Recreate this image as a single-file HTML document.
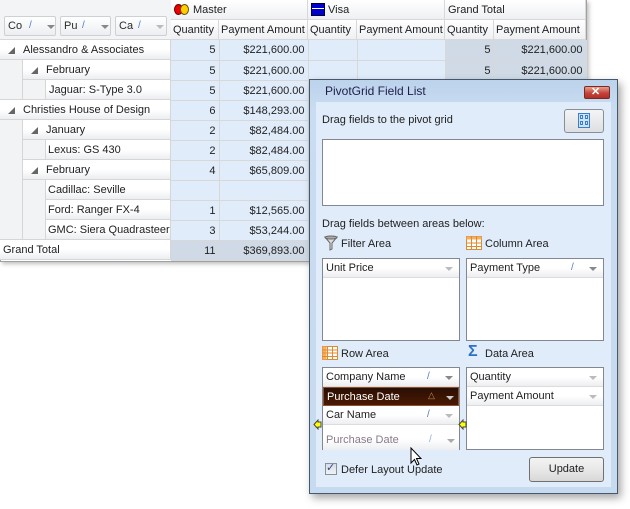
<!DOCTYPE html>
<html><head><meta charset="utf-8"><style>
*{margin:0;padding:0;box-sizing:border-box}
body{width:630px;height:509px;background:#fff;font-family:"Liberation Sans",Tahoma,sans-serif;font-size:11px;color:#1e1e1e;position:relative;overflow:hidden}
.a{position:absolute;white-space:nowrap}
.hd{background:linear-gradient(#fff,#eef0f3);border-right:1px solid #d8d8d8;border-bottom:1px solid #d8d8d8}
.rh{background:linear-gradient(#fff 50%,#eceef1);border-bottom:1px solid #d6d6d6;border-right:1px solid #d6d6d6;padding:4px 0 0 0;height:20px}
.tri{display:inline-block;width:0;height:0;border-left:7px solid transparent;border-bottom:7px solid #666;margin:0 8px 0 8px;vertical-align:-1px}
table{border-collapse:collapse;position:absolute;left:171px;top:40px}
td{height:20px;border-right:1px solid #d8d8d8;border-bottom:1px solid #d8d8d8;background:#e1ecfa;text-align:right;padding:1px 3px 0 3px;font-size:11px}
td.g{background:#cfdae6}
.btn{position:absolute;height:20px;border:1px solid #cdd0d4;background:linear-gradient(#fff,#eceef1);border-radius:2px;padding:3px 0 0 3px;color:#2a2a2a}
.dd{position:absolute;width:0;height:0;border-left:4px solid transparent;border-right:4px solid transparent;border-top:4px solid #888}
.sl{position:absolute;color:#5577cc;font-size:10px}
.box{position:absolute;background:#fff;border:1px solid #828790}
.fi{position:absolute;left:0;right:0;height:19px;background:linear-gradient(#fff 50%,#eceef1);border-bottom:1px solid #dcdcdc;padding:3px 0 0 3px}
</style></head><body>

<!-- GRID -->
<div class="a" style="left:0;top:0;width:587px;height:262px;border:1px solid #a0a0a0;border-top:none;background:#fff;box-shadow:2px 2px 4px rgba(0,0,0,.25)"></div>
<div class="a" style="left:0;top:0;width:171px;height:40px;background:#f3f4f6;border-bottom:1px solid #d8d8d8"></div>
<div class="btn" style="left:4px;top:16px;width:52px">Co<span class="sl" style="left:24px;top:3px">/</span><span class="dd" style="left:42px;top:8px"></span></div>
<div class="btn" style="left:60px;top:16px;width:51px">Pu<span class="sl" style="left:21px;top:3px">/</span><span class="dd" style="left:40px;top:8px"></span></div>
<div class="btn" style="left:115px;top:16px;width:52px">Ca<span class="sl" style="left:22px;top:3px">/</span><span class="dd" style="left:40px;top:8px;border-top-color:#bbb"></span></div>

<!-- column headers -->
<div class="a hd" style="left:171px;top:0;width:137px;height:20px;padding:4px 0 0 22px">Master</div>
<div class="a" style="left:174px;top:4px;width:9px;height:11px;border-radius:50%;background:#e00;border:1px solid #600"></div>
<div class="a" style="left:180px;top:4px;width:9px;height:11px;border-radius:50%;background:#fc0;border:1px solid #650"></div>
<div class="a hd" style="left:308px;top:0;width:137px;height:20px;padding:4px 0 0 20px">Visa</div>
<div class="a" style="left:311px;top:3px;width:14px;height:13px;background:#00c;border:1px solid #003"><div style="margin-top:4px;height:1px;background:#fff"></div></div>
<div class="a hd" style="left:445px;top:0;width:141px;height:20px;padding:4px 0 0 3px">Grand Total</div>
<div class="a hd" style="left:171px;top:20px;width:48px;height:20px;padding:4px 0 0 2px">Quantity</div>
<div class="a hd" style="left:219px;top:20px;width:89px;height:20px;padding:4px 0 0 2px">Payment Amount</div>
<div class="a hd" style="left:308px;top:20px;width:49px;height:20px;padding:4px 0 0 2px">Quantity</div>
<div class="a hd" style="left:357px;top:20px;width:88px;height:20px;padding:4px 0 0 2px">Payment Amount</div>
<div class="a hd" style="left:445px;top:20px;width:49px;height:20px;padding:4px 0 0 2px">Quantity</div>
<div class="a hd" style="left:494px;top:20px;width:92px;height:20px;padding:4px 0 0 2px">Payment Amount</div>

<!-- row headers -->
<div class="a" style="left:0;top:60px;width:23px;height:40px;background:#f2f3f5;border-right:1px solid #d6d6d6;border-bottom:1px solid #d6d6d6"></div>
<div class="a" style="left:0;top:120px;width:23px;height:120px;background:#f2f3f5;border-right:1px solid #d6d6d6;border-bottom:1px solid #d6d6d6"></div>
<div class="a" style="left:23px;top:80px;width:23px;height:20px;background:#f2f3f5;border-right:1px solid #d6d6d6;border-bottom:1px solid #d6d6d6"></div>
<div class="a" style="left:23px;top:140px;width:23px;height:20px;background:#f2f3f5;border-right:1px solid #d6d6d6;border-bottom:1px solid #d6d6d6"></div>
<div class="a" style="left:23px;top:180px;width:23px;height:60px;background:#f2f3f5;border-right:1px solid #d6d6d6;border-bottom:1px solid #d6d6d6"></div>
<div class="a rh" style="left:0;top:40px;width:171px"><span class="tri"></span>Alessandro &amp; Associates</div>
<div class="a rh" style="left:23px;top:60px;width:148px"><span class="tri"></span>February</div>
<div class="a rh" style="left:46px;top:80px;width:125px;padding-left:3px">Jaguar: S-Type 3.0</div>
<div class="a rh" style="left:0;top:100px;width:171px"><span class="tri"></span>Christies House of Design</div>
<div class="a rh" style="left:23px;top:120px;width:148px"><span class="tri"></span>January</div>
<div class="a rh" style="left:46px;top:140px;width:125px;padding-left:2px">Lexus: GS 430</div>
<div class="a rh" style="left:23px;top:160px;width:148px"><span class="tri"></span>February</div>
<div class="a rh" style="left:46px;top:180px;width:125px;padding-left:2px">Cadillac: Seville</div>
<div class="a rh" style="left:46px;top:200px;width:125px;padding-left:2px">Ford: Ranger FX-4</div>
<div class="a rh" style="left:46px;top:220px;width:125px;padding-left:2px">GMC: Siera Quadrasteer</div>
<div class="a rh" style="left:0;top:240px;width:171px;padding-left:3px">Grand Total</div>

<table>
<colgroup><col style="width:48px"><col style="width:89px"><col style="width:49px"><col style="width:88px"><col style="width:49px"><col style="width:92px"></colgroup>
<tr><td>5</td><td>$221,600.00</td><td></td><td></td><td class="g">5</td><td class="g">$221,600.00</td></tr>
<tr><td>5</td><td>$221,600.00</td><td></td><td></td><td class="g">5</td><td class="g">$221,600.00</td></tr>
<tr><td>5</td><td>$221,600.00</td><td></td><td></td><td class="g"></td><td class="g"></td></tr>
<tr><td>6</td><td>$148,293.00</td><td></td><td></td><td></td><td></td></tr>
<tr><td>2</td><td>$82,484.00</td><td></td><td></td><td></td><td></td></tr>
<tr><td>2</td><td>$82,484.00</td><td></td><td></td><td></td><td></td></tr>
<tr><td>4</td><td>$65,809.00</td><td></td><td></td><td></td><td></td></tr>
<tr><td></td><td></td><td></td><td></td><td></td><td></td></tr>
<tr><td>1</td><td>$12,565.00</td><td></td><td></td><td></td><td></td></tr>
<tr><td>3</td><td>$53,244.00</td><td></td><td></td><td></td><td></td></tr>
<tr><td class="g">11</td><td class="g">$369,893.00</td><td></td><td></td><td></td><td></td></tr>
</table>

<!-- DIALOG -->
<div class="a" style="left:309px;top:79px;width:309px;height:415px;background:linear-gradient(#bcd3ec,#c9dcf1 30px,#c6daf0);border:1px solid #46586c;box-shadow:3px 4px 8px rgba(0,0,0,.35)"></div>
<div class="a" style="left:325px;top:84px;font-size:12px;color:#1e1e4a">PivotGrid Field List</div>
<div class="a" style="left:584px;top:86px;width:26px;height:13px;border:1px solid #7a2a20;border-radius:2px;background:linear-gradient(#e8a090,#c4443a 55%,#b0302a)"></div>
<div class="a" style="left:591px;top:85px;color:#fff;font-weight:bold;font-size:11px">✕</div>
<div class="a" style="left:316px;top:102px;width:295px;height:385px;background:#e1ecfa"></div>
<div class="a" style="left:322px;top:114px">Drag fields to the pivot grid</div>
<div class="a" style="left:564px;top:109px;width:40px;height:24px;border:1px solid #8a8f96;border-radius:3px;background:linear-gradient(#f4f5f7,#dcdfe3)"></div>
<div class="a" style="left:578px;top:113px;width:12px;height:15px;border:1px solid #3a7dd0;background:#cfe3f8"></div>
<div class="a" style="left:580px;top:115px;width:3px;height:4px;border:1px solid #3a7dd0"></div>
<div class="a" style="left:585px;top:115px;width:3px;height:4px;border:1px solid #3a7dd0"></div>
<div class="a" style="left:580px;top:121px;width:3px;height:4px;border:1px solid #3a7dd0"></div>
<div class="a" style="left:585px;top:121px;width:3px;height:4px;border:1px solid #3a7dd0"></div>
<div class="box" style="left:322px;top:139px;width:282px;height:67px"></div>
<div class="a" style="left:322px;top:218px">Drag fields between areas below:</div>

<svg class="a" style="left:324px;top:235px" width="14" height="16" viewBox="0 0 14 16"><path d="M1 2 L13 2 L8 8 L8 14 L6 15 L6 8 Z" fill="#ddd" stroke="#666"/><ellipse cx="7" cy="2.5" rx="6" ry="1.5" fill="#aaa" stroke="#666"/></svg>
<div class="a" style="left:341px;top:238px">Filter Area</div>
<svg class="a" style="left:466px;top:236px" width="16" height="14"><rect x="0.5" y="0.5" width="15" height="13" fill="#fff" stroke="#e08a30"/><rect x="0.5" y="0.5" width="15" height="3" fill="#f4b060"/><path d="M0 7h16M0 10.5h16M5.5 0v14M10.5 0v14" stroke="#e08a30"/></svg>
<div class="a" style="left:485px;top:238px">Column Area</div>

<div class="box" style="left:322px;top:258px;width:138px;height:83px"><div class="fi" style="top:0">Unit Price<span class="dd" style="left:122px;top:8px;border-top-color:#bbb"></span></div></div>
<div class="box" style="left:466px;top:258px;width:138px;height:83px"><div class="fi" style="top:0">Payment Type<span class="sl" style="left:104px;top:3px">/</span><span class="dd" style="left:122px;top:8px"></span></div></div>

<svg class="a" style="left:322px;top:346px" width="16" height="14"><rect x="0.5" y="0.5" width="15" height="13" fill="#fff" stroke="#e08a30"/><rect x="0.5" y="0.5" width="4" height="13" fill="#f4b060"/><path d="M0 4h16M0 7h16M0 10.5h16M5.5 0v14M10.5 0v14" stroke="#e08a30"/></svg>
<div class="a" style="left:341px;top:348px">Row Area</div>
<div class="a" style="left:468px;top:343px;color:#2a70c8;font-size:16px;font-weight:bold">Σ</div>
<div class="a" style="left:485px;top:348px">Data Area</div>

<div class="box" style="left:322px;top:367px;width:138px;height:83px">
<div class="fi" style="top:0">Company Name<span class="sl" style="left:104px;top:3px">/</span><span class="dd" style="left:122px;top:8px"></span></div>
<div class="fi" style="top:19px;background:linear-gradient(#2a0e02,#4a1a04);color:#fff;border:1px solid #8a5030">Purchase Date<span class="a" style="left:104px;top:2px;color:#c09060;font-size:9px">△</span><span class="dd" style="left:122px;top:8px;border-top-color:#ccc"></span></div>
<div class="fi" style="top:38px">Car Name<span class="sl" style="left:104px;top:3px">/</span><span class="dd" style="left:122px;top:8px;border-top-color:#bbb"></span></div>
<div class="fi" style="top:60px;height:22px;border:none;color:#8a7a8a;padding-top:6px">Purchase Date<span class="sl" style="left:106px;top:6px;color:#99aadd">/</span><span class="dd" style="left:124px;top:11px;border-top-color:#aaa"></span></div>
</div>
<div class="box" style="left:466px;top:367px;width:138px;height:83px">
<div class="fi" style="top:0">Quantity<span class="dd" style="left:122px;top:8px;border-top-color:#bbb"></span></div>
<div class="fi" style="top:19px">Payment Amount<span class="dd" style="left:122px;top:8px;border-top-color:#bbb"></span></div>
</div>
<svg class="a" style="left:313px;top:419px" width="9" height="11"><path d="M1 5.5 L5 1 L5 3 L8 3 L8 8 L5 8 L5 10 Z" fill="#ff0" stroke="#444"/></svg>
<svg class="a" style="left:458px;top:419px" width="9" height="11"><path d="M1 5.5 L5 1 L5 3 L8 3 L8 8 L5 8 L5 10 Z" fill="#ff0" stroke="#444"/></svg>
<svg class="a" style="left:410px;top:447px" width="12" height="20"><path d="M1 1 L1 16 L4.5 12.5 L7 18 L9 17 L6.5 11.5 L11 11.5 Z" fill="#fff" stroke="#000"/></svg>

<div class="a" style="left:325px;top:463px;width:12px;height:12px;border:1px solid #8a9099;background:linear-gradient(#d8dde4,#f0f2f4)"></div>
<div class="a" style="left:326px;top:461px;color:#2b4a8a;font-size:11px">✓</div>
<div class="a" style="left:341px;top:464px">Defer Layout Update</div>
<div class="a" style="left:529px;top:457px;width:75px;height:25px;border:1px solid #707070;border-radius:3px;background:linear-gradient(#f3f3f3,#e8e8e8 50%,#d8d8d8);text-align:center;padding-top:5px">Update</div>
</body></html>
